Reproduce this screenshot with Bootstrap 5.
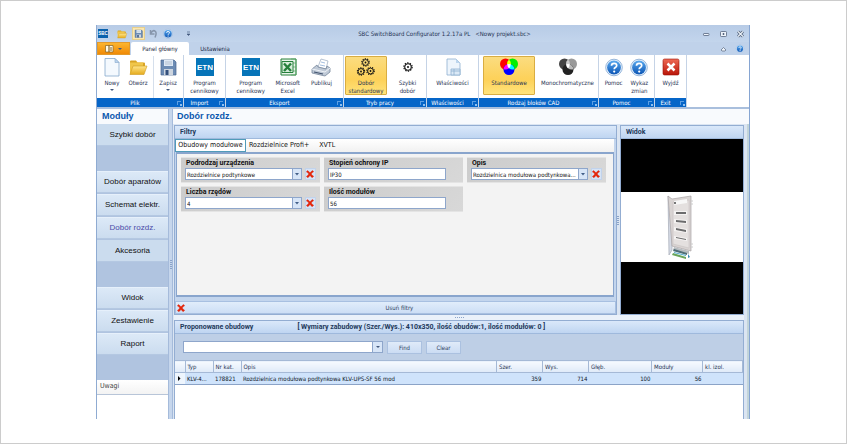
<!DOCTYPE html>
<html lang="pl">
<head>
<meta charset="utf-8">
<meta name="viewport" content="width=device-width, initial-scale=1">
<title>SBC SwitchBoard Configurator</title>
<link href="https://cdn.jsdelivr.net/npm/bootstrap@5.3.0/dist/css/bootstrap.min.css" rel="stylesheet">
<style>
:root{--ui:"DejaVu Sans Condensed","Noto Sans",sans-serif;--strong:Roboto,"Noto Sans",sans-serif;--line:#93add2;--navy:#1e395b}
body{font-family:var(--ui);font-size:6px;line-height:9px;color:#2b3d5c;background:#fff;min-height:100vh;border:1px solid #ccc;padding:24px 96px 24px 95px}
button,input,select{font-family:inherit;font-size:inherit;line-height:inherit;color:inherit}
button{border:0;padding:0;background:none}
svg{display:block;flex:none}
.app-window{background:#bed0e8;min-height:394px;border-left:1px solid #8fabd2;border-right:1px solid #86a5d2}
.title-bar{height:17px;background:linear-gradient(#b7cbe6,#c3d5ec)}
.title-bar .save-on{background:#fbe7b0;border:1px solid #e6cf8d}
.title-bar,.tab-bar{color:#1f3252}
.tab-bar{height:13px;background:#c0d2ea}
.app-menu{width:33px;margin-right:1px;background:linear-gradient(#fcb52f,#f08a06);border:1px solid #e39a2b}
.ribbon-tab{width:58px;background:#fff;border-radius:2px 2px 0 0;color:#16243a}
.ribbon-tab.plain{background:none;width:52px}
.ribbon{display:grid;grid-template-columns:87px 42px 118px 83px 52px 120px 56px 32px 1fr;height:52px;background:#fff}
.ribbon-group{display:flex;flex-direction:column;border-right:1px solid #c5d3e6;min-width:0}
.ribbon-items{flex:1;display:flex;justify-content:space-evenly;padding-top:1px;min-height:0}
.ribbon-items.packed{justify-content:flex-start;padding-left:1px;gap:2px}
.ribbon-items.wide-first{padding-left:4px}
.ribbon-items.packed .tool:last-child{flex:1}
.ribbon-caption{height:9px;background:#0565c8;color:#fff;text-align:center;padding-right:10px;position:relative}
.launcher{position:absolute;right:2px;top:3px;width:4px;height:4px;border-left:1px solid #5c9fe4;border-top:1px solid #5c9fe4}
.launcher::after{content:"";position:absolute;right:-1px;bottom:-1px;width:2px;height:2px;background:#8fc0f0}
.tool{display:flex;flex-direction:column;align-items:center;gap:2px;padding-top:1px;text-align:center;line-height:8px;white-space:nowrap;color:#1f3252}
.tool svg{width:22px;height:20px}
.tool.active{background:linear-gradient(#fbdc80,#fdd159 60%,#ffe37b);border:1px solid #d9ad42;border-radius:1px;padding-top:0;height:39px;align-self:flex-start}
.w-std{width:42px}.w-wide{width:52px}
.caret{width:0;height:0;border:2px solid transparent;border-top-color:#42587c;border-bottom:0}
.split-left{border-left:1px solid #d5dfec;padding-left:3px}
.body-grid{display:grid;grid-template-columns:71px 5px minmax(0,1fr);border-top:2px solid #a9bfdd;min-height:312px}
.heading-bar{height:15px;background:#f8fafd;margin:0;color:#0b57ae;font:700 9px/15px "Liberation Sans",sans-serif;padding-left:5px}
.side{display:flex;flex-direction:column;background:#b0c4e0}
.side-btn{height:22px;background:linear-gradient(#dce9f7,#cbdcef);border-bottom:1px solid #b4c8e2;border-top:1px solid #e6f0fb;color:#111;font:8px/20px "Liberation Sans",sans-serif;margin-bottom:1px;width:100%}
.side-btn.dim{background:#cbdcee;border-top-color:#cbdcee}
.side-btn.current{color:#4b4ba8}
.side-gap{height:24px}
.notes-head{height:15px;line-height:13px;font-size:7px;background:linear-gradient(#fff,#f3f3f3);border-bottom:1px solid #b8c5d8;padding-left:3px;color:#444}
.splitter{background:#c6d6ec;border-left:1px solid #a5bbdb;border-right:1px solid #a5bbdb;display:flex;align-items:center;justify-content:center}
.splitter.bare{border:0;width:3px;background:#dbe5f2}
.grip{width:2px;height:9px;background:repeating-linear-gradient(#8aa3c8 0 1px,transparent 1px 2px)}
.grip.flat{width:9px;height:1px;background:repeating-linear-gradient(90deg,#8aa3c8 0 1px,transparent 1px 2px)}
.grip-row{height:5px;background:#eaf1fa}
.workspace{padding:1px 3px 0 1px;background:#dbe5f2;border-right:2px solid #c2d4d9;flex:1}
.panel-box{border:1px solid var(--line);background:#c3d5ed}
.panel-head{height:13px;line-height:12px;background:linear-gradient(#dae8fa,#bfd5f1);border-bottom:1px solid #9fb9dc;color:var(--navy);font-family:var(--strong);font-weight:700;padding-left:5px;margin:0;font-size:7px;white-space:pre}
.panel-head .dims{padding-left:44px}
.filter-tabs{height:13px;font-size:7px;background:linear-gradient(#fff,#f1f1f1);margin-right:2px;color:#111}
.filter-tabs button{padding:0 3px}
.filter-tabs .chosen{border:1px solid #519bb9;background:#fff;width:71px;padding:0}
.filter-body{height:145px;background:#f3f3f3;border:1px solid #89a5cd;border-width:2px 1px;margin:0 2px 0 1px;padding:3px 7px 3px 4px;display:grid;grid-template-columns:repeat(3,minmax(0,1fr));grid-auto-rows:26px;gap:3px 4px}
.filter-box{background:linear-gradient(135deg,#ccc,#d8d8d8);padding:1px 4px;border:1px solid #e4e4e4;border-width:1px 0}
.filter-box label{display:block;font-family:var(--strong);font-size:7px;font-weight:700;color:#111;line-height:9px;padding-left:1px}
.field{width:118px;height:12px;border:1px solid #8ea6cb;background:#fff;border-radius:0;padding:0 1px;color:#111;outline:0;display:block}
select.field{appearance:none;text-overflow:ellipsis;background:#fff url("data:image/svg+xml,%3Csvg xmlns='http://www.w3.org/2000/svg' width='9' height='10'%3E%3Cpath d='M0 0h9v10H0z' fill='%23d7e5f7'/%3E%3Cpath d='M.5 0v10' stroke='%238ea6cb'/%3E%3Cpath d='M3 4h4L5 6.500z' fill='%23435f88'/%3E%3C/svg%3E") no-repeat right top;padding-right:9px}
.field-row{display:flex;gap:3px}
.clear-x{width:11px;height:12px;background:#d5e3f6;display:flex;align-items:center;justify-content:center;border:1px solid #c2d3eb}
.remove-bar{height:13px;margin:4px 0 0;width:100%;background:linear-gradient(#e1edfb,#ccdef5);border:1px solid #a8c0e1;display:flex;align-items:center;padding:0 1px}
.preview{display:flex;flex-direction:column;background:#000;width:125px}
.photo{background:#fff;height:70px;display:flex;justify-content:center;padding:3px 4px 0 0}
.search-row{height:26px;background:#becfe6;padding:0 0 0 8px;gap:4px}
.push{width:35px;height:13px;background:linear-gradient(#e0ebf9,#cbdcf3);border:1px solid #abc1e0}
.combo{width:200px;height:12px;border:1px solid #8ea6cb;background:#fff}
.combo input{border:0;outline:0;min-width:0;background:#fff;padding:0 2px}
.combo button{width:10px;border-left:1px solid #8ea6cb;background:#d7e5f7}
.result-list{width:100%;table-layout:fixed;border-collapse:collapse;background:#fff;margin:0}
.result-list th{font-weight:400;height:12px;padding:0 1px 0 2px;background:linear-gradient(#f6faff,#dfeaf8);border:1px solid #a5b9d6;border-width:1px 1px 1px 0;color:#1f3252;line-height:9px;white-space:nowrap}
.result-list td{height:12px;padding:0 1px 0 2px;background:#cfe3fb;border:1px solid #8ba3c7;border-width:1px 0;color:#0c1626;white-space:nowrap;overflow:hidden;text-overflow:ellipsis;line-height:9px}
.result-list td:nth-child(n+5){text-align:right}
.result-list td:first-child{background:#eef5fd;overflow:visible}
.c0{width:10px}.c1,.c2{width:28px}.c4,.c5{width:46px}.c6{width:63px}.c7{width:51px}.c8{width:40px}
.lower{background:#fff;min-height:99px;border-bottom:0}
</style>
<script src="https://cdn.jsdelivr.net/npm/bootstrap@5.3.0/dist/js/bootstrap.bundle.min.js"></script>
</head>
<body>
<svg width="0" height="0" class="position-absolute" aria-hidden="true"><defs>
<linearGradient id="gBlue" x2="0" y2="1"><stop stop-color="#5aa9ee"/><stop offset="1" stop-color="#0b55b5"/></linearGradient>
<linearGradient id="gGold" x2="0" y2="1"><stop stop-color="#ffe58a"/><stop offset="1" stop-color="#e5ab1c"/></linearGradient>
<linearGradient id="gRed" x2="0" y2="1"><stop stop-color="#ee6a55"/><stop offset="1" stop-color="#b91508"/></linearGradient>
<symbol id="folder" viewBox="0 0 22 20"><path d="M3 4.500q0-1 1-1h5l1.500 2H17q1 0 1 1V9H3z" fill="#d9a424"/><path d="M3 17V5.500h13V9z" fill="#f0c64a"/><path d="M3 17.500 6 9h14l-3 8.500z" fill="url(#gGold)" stroke="#cf9a20" stroke-width=".6"/></symbol>
<symbol id="disk" viewBox="0 0 22 20"><path d="M4 3h13l2 2v13H4z" fill="#6d8cb4" stroke="#49658f" stroke-width=".7"/><path d="M7 3h9v6H7z" fill="#dfe9f5"/><path d="M8 5h7M8 7h7" stroke="#9ab" stroke-width=".6"/><path d="M7 12h9v6H7z" fill="#cdd5df"/><path d="M8.500 13h3v5h-3z" fill="#35507c"/></symbol>
<symbol id="help" viewBox="0 0 22 20"><circle cx="11" cy="10.500" r="8.300" fill="#e8f2fc" stroke="#7da4d2" stroke-width=".8"/><circle cx="11" cy="10.500" r="6.900" fill="url(#gBlue)"/><path d="M8.500 8.700q0-2.400 2.600-2.400t2.600 2.200q0 1.200-1.400 2-1.100.6-1.100 1.800" fill="none" stroke="#fff" stroke-width="1.700"/><circle cx="11.200" cy="14.600" r="1.100" fill="#fff"/></symbol>
<symbol id="gear" viewBox="0 0 12 12"><circle cx="6" cy="6" r="5" fill="none" stroke="#111" stroke-width="1.400" stroke-dasharray="1.600 1.540"/><circle cx="6" cy="6" r="3.900" fill="none" stroke="#111" stroke-width="1.300"/><circle cx="6" cy="6" r="1.200" fill="#111"/></symbol>
<symbol id="redx" viewBox="0 0 8 8"><path d="M1.300.6q1.700.8 2.700 2.200Q5 1.300 6.700.5l.9 1.300Q5.900 2.700 5.200 4q.9 1.400 2.500 2.300L6.200 7.700Q4.900 6.700 4 5.500 3.200 6.800 1.700 7.800L.4 6.400Q2 5.300 2.800 4 2 2.700.4 2z" fill="#e3260b" stroke="#e3260b" stroke-width=".4"/></symbol>
</defs></svg>

<main class="app-window d-flex flex-column">
  <header class="title-bar d-flex align-items-center">
    <div class="d-flex align-items-center gap-1">
      <svg width="11" height="9" viewBox="0 0 11 9"><path fill="#0b62ad" d="M1 0h10v9H1z"/><text x="6" y="6" font-size="4.500" font-weight="700" fill="#fff" text-anchor="middle" font-family="Liberation Sans">SBC</text></svg>
      <button aria-label="Otwórz plik" class="ms-1"><svg width="12" height="12"><use href="#folder"/></svg></button>
      <button aria-label="Zapisz plik" class="save-on"><svg width="11" height="11"><use href="#disk"/></svg></button>
      <button aria-label="Cofnij"><svg width="9" height="9" viewBox="0 0 9 9"><path d="M1.500 1v4h4M2 4Q3.500 1.200 5.500 1.700 8.500 3 6 8.500" fill="none" stroke="#8695ab" stroke-width="1.500"/></svg></button>
      <button aria-label="Szybka pomoc"><svg width="12" height="11"><use href="#help"/></svg></button>
      <button aria-label="Dostosuj pasek" class="ms-2"><svg width="5" height="6" viewBox="0 0 5 6"><path d="M1 1h3M1 3h3L2.500 4.500z" fill="#42587c" stroke="#42587c" stroke-width=".6"/></svg></button>
    </div>
    <div class="flex-fill text-center pe-1">SBC SwitchBoard Configurator 1.2.17a PL &nbsp; &lt;Nowy projekt.sbc&gt;</div>
    <div class="d-flex align-items-center gap-2 pe-1">
      <button aria-label="Minimalizuj"><svg width="9" height="8" viewBox="0 0 9 8"><rect x="1.500" y="3.500" width="5.500" height="2" rx=".6" fill="#eef4fb" stroke="#56657d" stroke-width=".8"/></svg></button>
      <button aria-label="Maksymalizuj"><svg width="9" height="8" viewBox="0 0 9 8"><rect x="1.500" y="1.500" width="6" height="5" rx=".8" fill="#eef4fb" stroke="#56657d" stroke-width=".8"/><path d="M3.500 4h2M4.500 3v2" stroke="#56657d"/></svg></button>
      <button aria-label="Zamknij"><svg width="9" height="8" viewBox="0 0 9 8"><path d="M2 1.500 7 6.500M7 1.500 2 6.500" stroke="#56657d" stroke-width="2.800"/><path d="M2 1.500 7 6.500M7 1.500 2 6.500" stroke="#eef4fb" stroke-width="1.100"/></svg></button>
    </div>
  </header>

  <nav class="tab-bar d-flex" aria-label="Wstążka">
    <button class="app-menu d-flex align-items-center justify-content-center gap-1" aria-label="Menu programu"><svg width="9" height="8" viewBox="0 0 9 8"><path d="M.5.5h3.500v6.500H.5zM4 .5h4v6.500H4z" fill="#fffbe8" stroke="#86611f" stroke-width=".7"/><path d="M6 2v4" stroke="#86611f"/></svg><span class="caret"></span></button>
    <button class="ribbon-tab">Panel główny</button>
    <button class="ribbon-tab plain">Ustawienia</button>
    <div class="ms-auto d-flex align-items-center gap-2 pe-1">
      <button aria-label="Zwiń wstążkę"><svg width="7" height="6" viewBox="0 0 7 6"><path d="M1 4 3.500 1.500 6 4 5 5H2z" fill="#eef4fb" stroke="#56657d" stroke-width=".7"/></svg></button>
      <button aria-label="Informacje"><svg width="10" height="11"><use href="#help"/></svg></button>
    </div>
  </nav>

  <section class="ribbon" aria-label="Panel główny">
    <div class="ribbon-group"><div class="ribbon-items">
      <button class="tool"><svg viewBox="0 0 22 20"><path d="M4 1.500h10l4 4V19H4z" fill="#f4f9fe" stroke="#86a8cc" stroke-width=".8"/><path d="M14 1.500v4h4z" fill="#bdd6ee" stroke="#86a8cc" stroke-width=".6"/></svg><span>Nowy</span><span class="caret"></span></button>
      <button class="tool"><svg><use href="#folder"/></svg><span>Otwórz</span></button>
      <button class="tool split-left"><svg><use href="#disk"/></svg><span>Zapisz</span><span class="caret"></span></button>
    </div><div class="ribbon-caption">Plik<i class="launcher"></i></div></div>

    <div class="ribbon-group"><div class="ribbon-items">
      <button class="tool"><svg viewBox="0 0 22 20"><path fill="#0674b8" d="M2 1h18v18H2z"/><text x="11" y="13" text-anchor="middle" font-size="8" font-weight="700" fill="#fff" font-family="Liberation Sans">ETN</text></svg><span>Program<br>cennikowy</span></button>
    </div><div class="ribbon-caption">Import<i class="launcher"></i></div></div>

    <div class="ribbon-group"><div class="ribbon-items">
      <button class="tool"><svg viewBox="0 0 22 20"><path fill="#0674b8" d="M2 1h18v18H2z"/><text x="11" y="13" text-anchor="middle" font-size="8" font-weight="700" fill="#fff" font-family="Liberation Sans">ETN</text></svg><span>Program<br>cennikowy</span></button>
      <button class="tool"><svg viewBox="0 0 22 20"><path d="M4 2h15v16H4z" fill="#e9f4ea" stroke="#27803b"/><path d="M14 2h5v16h-5M14 6h5M14 10h5M14 14h5" fill="none" stroke="#5aa868" stroke-width=".7"/><path d="M5 4.500h11v11H5z" fill="#d8eedb" stroke="#26803b"/><path d="m7 6.500 7 7.500M14 6.500 7 14" stroke="#26803b" stroke-width="2.400"/></svg><span>Microsoft<br>Excel</span></button>
      <button class="tool"><svg viewBox="0 0 22 20"><path d="m8 10 3-8 7 2-2 8z" fill="#fff" stroke="#9aabc0" stroke-width=".7"/><path d="m11 5 4 1M10 8l5 1" stroke="#7da4d2" stroke-width=".7"/><path d="m2 12 5-4 1 2 8 2 1-3 3 2v4l-5 4-13-3z" fill="#c0cad7" stroke="#75859b" stroke-width=".8"/><path d="m2 12 13 3 5-4" fill="none" stroke="#eef2f7"/><path d="m4 15 9 2" stroke="#42546e" stroke-width="1.200"/></svg><span>Publikuj</span></button>
    </div><div class="ribbon-caption">Eksport<i class="launcher"></i></div></div>

    <div class="ribbon-group"><div class="ribbon-items packed">
      <button class="tool active w-std"><svg viewBox="0 0 22 20"><use href="#gear" x="6" y="1" width="9" height="9"/><use href="#gear" x="1.500" y="10" width="9" height="9"/><use href="#gear" x="11" y="9.500" width="9" height="9"/></svg><span>Dobór<br>standardowy</span></button>
      <button class="tool"><svg viewBox="0 0 22 20"><use href="#gear" x="6" y="5" width="10" height="10"/></svg><span>Szybki<br>dobór</span></button>
    </div><div class="ribbon-caption">Tryb pracy<i class="launcher"></i></div></div>

    <div class="ribbon-group"><div class="ribbon-items">
      <button class="tool"><svg viewBox="0 0 22 20"><path d="M5 2h9l4 4v12H5z" fill="#eef5fc" stroke="#8eafd1" stroke-width=".8"/><path d="M14 2v4h4z" fill="#bdd6ee"/><path d="M9 12h9v6H9zM9 14h9M12 12v6" fill="#dbe9f6" stroke="#8eafd1" stroke-width=".8"/></svg><span>Właściwości</span></button>
    </div><div class="ribbon-caption">Właściwości<i class="launcher"></i></div></div>

    <div class="ribbon-group"><div class="ribbon-items packed wide-first">
      <button class="tool active w-wide"><svg viewBox="0 0 22 20"><circle cx="7.500" cy="7" r="5.500" fill="#f00"/><circle cx="14.500" cy="7" r="5.500" fill="#0e0"/><circle cx="11" cy="12.500" r="5.500" fill="#00f"/><path d="M11 2.800a5.500 5.500 0 0 1 0 8.400 5.500 5.500 0 0 1 0-8.400" fill="#ff0"/><path d="M5.600 12.200a5.500 5.500 0 0 1 5.400-5.200v4.200a5.500 5.500 0 0 1-5.400 1" fill="#f0f"/><path d="M16.400 12.200a5.500 5.500 0 0 0-5.400-5.200v4.200a5.500 5.500 0 0 0 5.400 1" fill="#0ff"/><path d="M9.200 7.300q1.800-.6 3.600 0-.2 2.500-1.800 4-1.600-1.500-1.800-4" fill="#fff"/></svg><span>Standardowe</span></button>
      <button class="tool"><svg viewBox="0 0 22 20"><circle cx="7.500" cy="7" r="5.500" fill="#444"/><circle cx="14.500" cy="7" r="5.500" fill="#999"/><circle cx="11" cy="12.500" r="5.500" fill="#222"/><path d="M11 2.800a5.500 5.500 0 0 1 0 8.400 5.500 5.500 0 0 1 0-8.400" fill="#ccc"/><path d="M16.400 12.200a5.500 5.500 0 0 0-5.400-5.200v4.200a5.500 5.500 0 0 0 5.400 1" fill="#bbb"/><path d="M9.200 7.300q1.800-.6 3.600 0-.2 2.500-1.800 4-1.600-1.500-1.800-4" fill="#fff"/></svg><span>Monochromatyczne</span></button>
    </div><div class="ribbon-caption">Rodzaj bloków CAD<i class="launcher"></i></div></div>

    <div class="ribbon-group"><div class="ribbon-items">
      <button class="tool"><svg><use href="#help"/></svg><span>Pomoc</span></button>
      <button class="tool"><svg><use href="#help"/></svg><span>Wykaz<br>zmian</span></button>
    </div><div class="ribbon-caption">Pomoc<i class="launcher"></i></div></div>

    <div class="ribbon-group"><div class="ribbon-items">
      <button class="tool"><svg viewBox="0 0 22 20"><rect x="3" y="2" width="16" height="16" rx="1.500" fill="url(#gRed)" stroke="#9c1208" stroke-width=".6"/><path d="m7.500 6.500 7 7M14.500 6.500l-7 7" stroke="#fff" stroke-width="2.500"/></svg><span>Wyjdź</span></button>
    </div><div class="ribbon-caption">Exit<i class="launcher"></i></div></div>
  </section>

  <div class="body-grid flex-fill">
    <aside class="side">
      <h2 class="heading-bar mb-0">Moduły</h2>
      <button class="side-btn dim">Szybki dobór</button>
      <div class="side-gap"></div>
      <button class="side-btn">Dobór aparatów</button>
      <button class="side-btn">Schemat elektr.</button>
      <button class="side-btn current">Dobór rozdz.</button>
      <button class="side-btn dim">Akcesoria</button>
      <div class="side-gap"></div>
      <button class="side-btn">Widok</button>
      <button class="side-btn">Zestawienie</button>
      <button class="side-btn">Raport</button>
      <div class="side-gap"></div>
      <div class="notes-head">Uwagi</div>
      <div class="flex-fill bg-white"></div>
    </aside>
    <div class="splitter"><span class="grip"></span></div>

    <div class="d-flex flex-column">
      <h1 class="heading-bar ps-1">Dobór rozdz.</h1>
      <div class="workspace d-flex flex-column">
        <div class="d-flex">
          <section class="panel-box flex-fill">
            <h3 class="panel-head">Filtry</h3>
            <div class="filter-tabs d-flex">
              <button class="chosen">Obudowy modułowe</button>
              <button>Rozdzielnice Profi+</button>
              <button class="ms-1">XVTL</button>
            </div>
            <form class="filter-body">
              <div class="filter-box"><label for="kind">Podrodzaj urządzenia</label><div class="field-row"><select id="kind" class="field"><option>Rozdzielnice podtynkowe</option></select><button type="button" class="clear-x" aria-label="Wyczyść podrodzaj"><svg width="8" height="8"><use href="#redx"/></svg></button></div></div>
              <div class="filter-box"><label for="ip">Stopień ochrony IP</label><input id="ip" class="field" value="IP30"></div>
              <div class="filter-box"><label for="desc">Opis</label><div class="field-row"><select id="desc" class="field"><option>Rozdzielnica modułowa podtynkowa...</option></select><button type="button" class="clear-x" aria-label="Wyczyść opis"><svg width="8" height="8"><use href="#redx"/></svg></button></div></div>
              <div class="filter-box"><label for="rows">Liczba rzędów</label><div class="field-row"><select id="rows" class="field"><option>4</option></select><button type="button" class="clear-x" aria-label="Wyczyść liczbę rzędów"><svg width="8" height="8"><use href="#redx"/></svg></button></div></div>
              <div class="filter-box"><label for="mods">Ilość modułów</label><input id="mods" class="field" value="56"></div>
            </form>
            <button class="remove-bar"><svg width="8" height="8"><use href="#redx"/></svg><span class="flex-fill">Usuń filtry</span></button>
          </section>
          <div class="splitter bare"><span class="grip"></span></div>
          <section class="panel-box preview">
            <h3 class="panel-head">Widok</h3>
            <div class="flex-fill"></div>
            <div class="photo">
              <svg width="28" height="66" viewBox="0 0 28 66" role="img" aria-label="Rozdzielnica modułowa">
                <path d="m2 1 4 4v50l-3 5z" fill="#d5dae5" stroke="#a5aab6" stroke-width=".7"/><path d="m2 1 4 3L25 1v55L6 51z" fill="#d9d4d3" stroke="#aaa5a6" stroke-width=".7"/><path d="m7 7 16-2v48L7 49z" fill="#e4e0df" stroke="#c5bfbe" stroke-width=".5"/>
                <path d="m8 6 13-2v4L8 10z" fill="#f7f7f7"/><path d="M8 7h2v2H8z" fill="#777"/>
                <path d="M8 16h13v4H8zM8 24l13 1v4L8 28zM8 32l13 2v4L8 36zM8 41l13 2v3L8 44z" fill="#f5f3f2"/><path d="M10 17h10v2H10zM10 25l10 1v2L10 27zM10 33l10 2v2L10 35zM10 42l10 2v1L10 43z" fill="#6c6c6d"/>
                <path d="M25 6h2M25 9h2M25 49h2M25 52h2" stroke="#ccc"/><path d="m8 52 15 4v3L7 55z" fill="#b7bcc0"/><path d="m8 54 13 4v2L7 56z" fill="#4e6e77"/><path d="m7 58 13 4v2L6 60z" fill="#6aa55b"/><path d="m8 57 12 3v1L8 58z" fill="#51a9cf"/><path d="m22 59 2 3-2 1z" fill="#3e88b5"/>
              </svg>
            </div>
            <div class="flex-fill"></div>
          </section>
        </div>
        <div class="grip-row d-flex align-items-center justify-content-center"><span class="grip flat"></span></div>
        <section class="panel-box lower flex-fill">
          <h3 class="panel-head">Proponowane obudowy<span class="dims">[ Wymiary zabudowy (Szer./Wys.): 410x350, ilość obudów:1, ilość modułów: 0 ]</span></h3>
          <div class="search-row d-flex align-items-center">
            <div class="combo d-flex"><input class="flex-fill" aria-label="Szukaj"><button class="d-flex align-items-center justify-content-center" aria-label="Historia"><span class="caret"></span></button></div>
            <button class="push">Find</button>
            <button class="push">Clear</button>
          </div>
          <table class="result-list">
            <colgroup><col class="c0"><col class="c1"><col class="c2"><col><col class="c4"><col class="c5"><col class="c6"><col class="c7"><col class="c8"></colgroup>
            <thead><tr><th></th><th>Typ</th><th>Nr kat.</th><th>Opis</th><th>Szer.</th><th>Wys.</th><th>Głęb.</th><th>Moduły</th><th>kl. izol.</th></tr></thead>
            <tbody><tr><td><svg width="4" height="5" viewBox="0 0 4 5"><path d="M1 0v5l2.500-2.500z"/></svg></td><td>KLV-4...</td><td>178821</td><td>Rozdzielnica modułowa podtynkowa KLV-UPS-SF 56 mod</td><td>359</td><td>714</td><td>100</td><td>56</td><td></td></tr></tbody>
          </table>
        </section>
      </div>
    </div>
  </div>
</main>
</body>
</html>
